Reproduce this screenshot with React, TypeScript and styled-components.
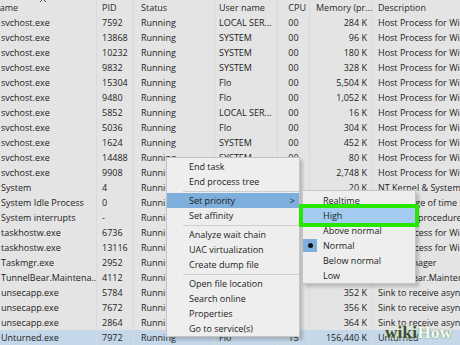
import React from "react";
import styled, { createGlobalStyle } from "styled-components";

const Global = createGlobalStyle`
  html, body { margin: 0; padding: 0; background: #e4e4e4; overflow: hidden; }
  * { box-sizing: border-box; }
`;

const Page = styled.div`
  position: relative;
  width: 460px;
  height: 345px;
  overflow: hidden;
  background: #e4e4e4;
  font-family: "Open Sans", "Noto Sans", sans-serif;
  font-size: 9px;
  color: #1c1c1c;
`;

const Grid = styled.div`
  display: grid;
  grid-template-columns: 97px 37px 81px 63px 32px 63px 120px;
`;

const HeaderRow = styled(Grid)`
  height: 15px;
  color: #2a2a2a;
`;

const Row = styled(Grid)<{ $selected?: boolean }>`
  height: 15px;
  background: ${(p) => (p.$selected ? "#c4d8ea" : "transparent")};
`;

type Align = "left" | "right" | "center";

const Cell = styled.div<{ $align?: Align; $pl?: number; $pr?: number }>`
  display: flex;
  align-items: center;
  justify-content: ${(p) =>
    p.$align === "right" ? "flex-end" : p.$align === "center" ? "center" : "flex-start"};
  padding-left: ${(p) => p.$pl ?? 0}px;
  padding-right: ${(p) => p.$pr ?? 0}px;
  white-space: nowrap;
  overflow: hidden;
  border-right: 1px solid #dadada;
  line-height: 15px;
  &:last-child { border-right: none; overflow: visible; }
`;

const NameHeader = styled(Cell)`
  position: relative;
  overflow: visible;
  padding-left: 0;
  & > span { margin-left: -7px; }
`;

const SortArrow = styled.svg`
  position: absolute;
  left: 39px;
  top: -3px;
`;

const Menu = styled.div`
  position: absolute;
  left: 166px;
  top: 157px;
  width: 134px;
  background: #eeeeee;
  border: 1px solid #c4c4c4;
  box-shadow: 3px 3px 3px rgba(0, 0, 0, 0.18);
  padding-top: 1px;
`;

const SubMenu = styled.div`
  position: absolute;
  left: 302px;
  top: 190px;
  width: 114px;
  background: #eeeeee;
  border: 1px solid #c4c4c4;
  box-shadow: 3px 3px 3px rgba(0, 0, 0, 0.18);
  padding-top: 2px;
`;

const Item = styled.div<{ $hl?: string; $indent: number; $mark?: boolean }>`
  position: relative;
  height: 15px;
  line-height: 15px;
  padding-left: ${(p) => p.$indent}px;
  background: ${(p) => p.$hl ?? "transparent"};
  white-space: nowrap;
  ${(p) =>
    p.$mark
      ? `outline: 4px solid #27e600; z-index: 1;`
      : ""}
`;

const Chevron = styled.span`
  position: absolute;
  right: 4px;
  top: 0;
  font-size: 9px;
`;

const Bullet = styled.span`
  position: absolute;
  left: 0;
  top: 1px;
  width: 14px;
  height: 13px;
  background: #7eaedb;
  display: flex;
  align-items: center;
  justify-content: center;
  &::after {
    content: "";
    width: 5px;
    height: 5px;
    border-radius: 50%;
    background: #111;
  }
`;

const Sep = styled.div`
  height: 4px;
  margin-left: 16px;
  display: flex;
  align-items: center;
  &::after {
    content: "";
    flex: 1;
    height: 1px;
    background: #cfcfcf;
  }
`;

const Watermark = styled.div`
  position: absolute;
  left: 385px;
  top: 323px;
  font-family: "Liberation Serif", "DejaVu Serif", serif;
  font-weight: bold;
  font-size: 17px;
  line-height: 20px;
  letter-spacing: 0.3px;
`;

const Wiki = styled.span`
  color: #3d4a30;
  text-shadow: 0 0 2px #eef6e6, 0 0 3px #b8d4a0;
`;

const How = styled.span`
  color: #f6faf2;
  text-shadow: 0 0 2px rgba(90, 130, 60, 0.9);
`;

type Proc = [string, string, string, string, string, string, string];

const HPW = "Host Process for Windows Services";
const SINK = "Sink to receive asynchronous callbacks for WMI client applications";
const rows: Proc[] = [
  ["svchost.exe", "7592", "Running", "LOCAL SER...", "00", "284 K", HPW],
  ["svchost.exe", "13868", "Running", "SYSTEM", "00", "96 K", HPW],
  ["svchost.exe", "10232", "Running", "SYSTEM", "00", "180 K", HPW],
  ["svchost.exe", "9832", "Running", "SYSTEM", "00", "328 K", HPW],
  ["svchost.exe", "15304", "Running", "Flo", "00", "5,504 K", HPW],
  ["svchost.exe", "9480", "Running", "Flo", "00", "1,052 K", HPW],
  ["svchost.exe", "5852", "Running", "LOCAL SER...", "00", "16 K", HPW],
  ["svchost.exe", "5036", "Running", "Flo", "00", "304 K", HPW],
  ["svchost.exe", "1624", "Running", "SYSTEM", "00", "452 K", HPW],
  ["svchost.exe", "14488", "Running", "SYSTEM", "00", "80 K", HPW],
  ["svchost.exe", "9908", "Running", "SYSTEM", "00", "2,748 K", HPW],
  ["System", "4", "Running", "SYSTEM", "00", "20 K", "NT Kernel & System"],
  ["System Idle Process", "0", "Running", "SYSTEM", "99", "8 K", "Percentage of time the processor is idle"],
  ["System interrupts", "-", "Running", "SYSTEM", "01", "0 K", "Deferred procedure calls and interrupt service routines"],
  ["taskhostw.exe", "6736", "Running", "Flo", "00", "1,720 K", "Host Process for Windows Tasks"],
  ["taskhostw.exe", "13116", "Running", "Flo", "00", "2,412 K", "Host Process for Windows Tasks"],
  ["Taskmgr.exe", "2952", "Running", "Flo", "01", "20,932 K", "Task Manager"],
  ["TunnelBear.Maintena...", "4112", "Running", "SYSTEM", "00", "3,104 K", "TunnelBear.Maintenance"],
  ["unsecapp.exe", "5784", "Running", "SYSTEM", "00", "352 K", SINK],
  ["unsecapp.exe", "7672", "Running", "SYSTEM", "00", "356 K", SINK],
  ["unsecapp.exe", "2864", "Running", "SYSTEM", "00", "364 K", SINK],
  ["Unturned.exe", "7972", "Running", "Flo", "15", "156,440 K", "Unturned"],
];

type MenuEntry = { label?: string; sep?: boolean; hl?: boolean; sub?: boolean };
const menu: MenuEntry[] = [
  { label: "End task" },
  { label: "End process tree" },
  { sep: true },
  { label: "Set priority", hl: true, sub: true },
  { label: "Set affinity" },
  { sep: true },
  { label: "Analyze wait chain" },
  { label: "UAC virtualization" },
  { label: "Create dump file" },
  { sep: true },
  { label: "Open file location" },
  { label: "Search online" },
  { label: "Properties" },
  { label: "Go to service(s)" },
];

const priorities = ["Realtime", "High", "Above normal", "Normal", "Below normal", "Low"];

export default function App() {
  return (
    <Page>
      <Global />
      <HeaderRow>
        <NameHeader>
          <span>Name</span>
          <SortArrow width="8" height="6" viewBox="0 0 8 6">
            <path d="M1 5 L4 2 L7 5" fill="none" stroke="#555" strokeWidth="1" />
          </SortArrow>
        </NameHeader>
        <Cell $pl={5}>PID</Cell>
        <Cell $pl={7}>Status</Cell>
        <Cell $pl={4}>User name</Cell>
        <Cell $align="right" $pr={3}>CPU</Cell>
        <Cell $pl={6}>Memory (pr...</Cell>
        <Cell $pl={5}>Description</Cell>
      </HeaderRow>
      {rows.map((r, i) => (
        <Row key={i} $selected={i === rows.length - 1}>
          <Cell $pl={1}>{r[0]}</Cell>
          <Cell $pl={5}>{r[1]}</Cell>
          <Cell $pl={7}>{r[2]}</Cell>
          <Cell $pl={4}>{r[3]}</Cell>
          <Cell $align="center">{r[4]}</Cell>
          <Cell $align="right" $pr={5}>{r[5]}</Cell>
          <Cell $pl={5}>{r[6]}</Cell>
        </Row>
      ))}
      <Menu>
        {menu.map((m, i) =>
          m.sep ? (
            <Sep key={i} />
          ) : (
            <Item key={i} $indent={22} $hl={m.hl ? "#7eaedb" : undefined}>
              {m.label}
              {m.sub && <Chevron>&gt;</Chevron>}
            </Item>
          )
        )}
      </Menu>
      <SubMenu>
        {priorities.map((p) => (
          <Item
            key={p}
            $indent={20}
            $hl={p === "High" ? "#a4cbf0" : undefined}
            $mark={p === "High"}
          >
            {p === "Normal" && <Bullet />}
            {p}
          </Item>
        ))}
      </SubMenu>
      <Watermark>
        <Wiki>wiki</Wiki>
        <How>How</How>
      </Watermark>
    </Page>
  );
}
